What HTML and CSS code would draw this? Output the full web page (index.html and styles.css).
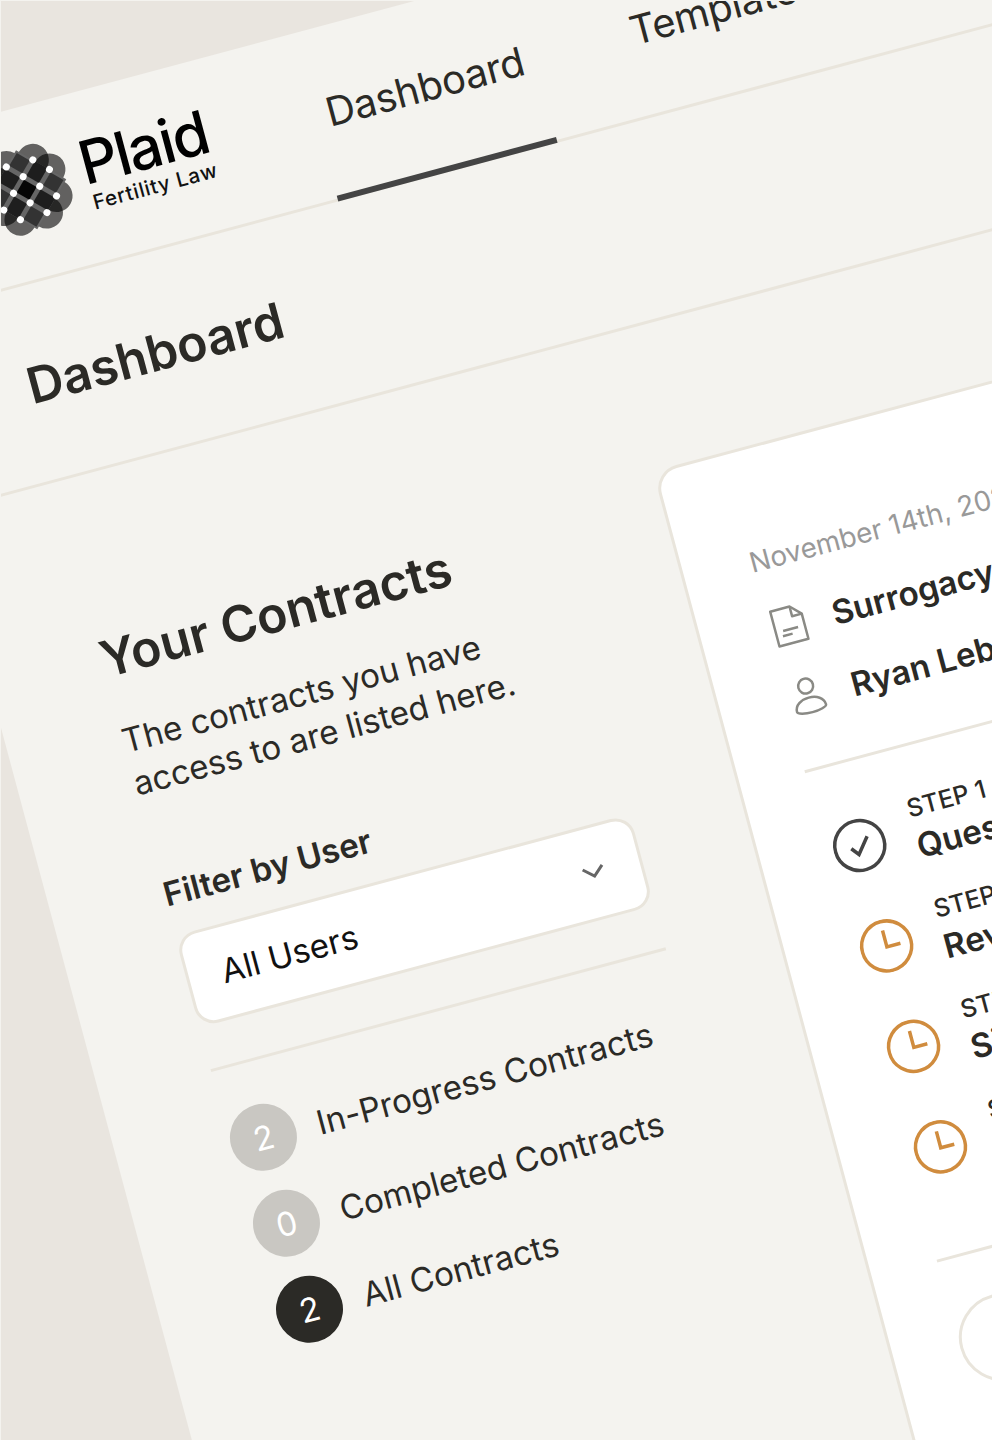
FILE: index.html
```html
<!DOCTYPE html>
<html lang="en">
<head>
    <meta charset="UTF-8">
    <meta name="viewport" content="width=device-width, initial-scale=1.0">
    <title>Plaid Fertility Law - Dashboard</title>
    <link rel="stylesheet" href="styles.css">
</head>
<body>
<div class="stage">
    <div class="frame">

        <header class="topbar">
            <div class="brand">
                <svg class="brand-mark" width="100" height="100" viewBox="-50 -50 100 100">
                    <g transform="rotate(45)">
                        <g fill="#000" fill-opacity="0.6">
                            <circle cx="-9.6" cy="-29" r="16"/>
                            <circle cx="9.6" cy="-29" r="16"/>
                            <circle cx="-9.6" cy="29" r="16"/>
                            <circle cx="9.6" cy="29" r="16"/>
                            <circle cx="-29" cy="-9.6" r="16"/>
                            <circle cx="-29" cy="9.6" r="16"/>
                            <circle cx="29" cy="-9.6" r="16"/>
                            <circle cx="29" cy="9.6" r="16"/>
                        </g>
                        <rect x="-29" y="-29" width="58" height="58" fill="#666"/>
                        <g fill="#333">
                            <rect x="-27" y="-27" width="15" height="15"/>
                            <rect x="12" y="-27" width="15" height="15"/>
                            <rect x="-27" y="12" width="15" height="15"/>
                            <rect x="12" y="12" width="15" height="15"/>
                        </g>
                        <g fill="#1e1e1e">
                            <rect x="-7.3" y="-29" width="14.6" height="17"/>
                            <rect x="-7.3" y="12" width="14.6" height="17"/>
                            <rect x="-29" y="-7.3" width="17" height="14.6"/>
                            <rect x="12" y="-7.3" width="17" height="14.6"/>
                        </g>
                        <rect x="-7.3" y="-7.3" width="14.6" height="14.6" fill="#060606"/>
                        <g fill="#fff">
                            <circle cx="-9.6" cy="-29" r="3.5"/>
                            <circle cx="9.6" cy="-29" r="3.5"/>
                            <circle cx="-29" cy="-9.6" r="3.5"/>
                            <circle cx="-9.6" cy="-9.6" r="3.5"/>
                            <circle cx="9.6" cy="-9.6" r="3.5"/>
                            <circle cx="29" cy="-9.6" r="3.5"/>
                            <circle cx="-29" cy="9.6" r="3.5"/>
                            <circle cx="-9.6" cy="9.6" r="3.5"/>
                            <circle cx="9.6" cy="9.6" r="3.5"/>
                            <circle cx="29" cy="9.6" r="3.5"/>
                            <circle cx="-9.6" cy="29" r="3.5"/>
                            <circle cx="9.6" cy="29" r="3.5"/>
                        </g>
                    </g>
                </svg>
                <div class="brand-text">
                    <div class="brand-name">Plaid</div>
                    <div class="brand-sub">Fertility Law</div>
                </div>
            </div>
            <nav class="nav">
                <a class="nav-link active" href="#">Dashboard</a>
                <a class="nav-link" href="#">Templates</a>
            </nav>
        </header>

        <section class="titlebar">
            <h1>Dashboard</h1>
        </section>

        <main class="content">
            <aside class="sidebar">
                <h2>Your Contracts</h2>
                <p class="intro">The contracts you have access to are listed here.</p>

                <label class="filter-label">Filter by User</label>
                <div class="select">
                    <span>All Users</span>
                    <svg width="24" height="14" viewBox="0 0 24 14"><path d="M2 2l10 9 10-9" fill="none" stroke="#666" stroke-width="3"/></svg>
                </div>

                <hr class="rule">

                <ul class="counts">
                    <li><span class="badge">2</span>In-Progress Contracts</li>
                    <li><span class="badge">0</span>Completed Contracts</li>
                    <li><span class="badge dark">2</span>All Contracts</li>
                </ul>
            </aside>

            <article class="card">
                <div class="card-date">November 14th, 2023</div>

                <div class="meta">
                    <svg width="40" height="40" viewBox="0 0 40 40" fill="none" stroke="#8a8a85" stroke-width="2.5" stroke-linejoin="round">
                        <path d="M5 2h20l10 10v26H5z"/>
                        <path d="M25 2v10h10M12.500 24H28M11 29h10"/>
                    </svg>
                    <span>Surrogacy Agreement</span>
                </div>
                <div class="meta">
                    <svg width="40" height="40" viewBox="0 0 40 40" fill="none" stroke="#8a8a85" stroke-width="2.5">
                        <circle cx="20" cy="9" r="7.5"/>
                        <path d="M5 32c0-7 7-11 15-11s15 4 15 11c0 2-7 4-15 4s-15-2-15-4z"/>
                    </svg>
                    <span>Ryan Lebowitz</span>
                </div>

                <hr class="card-rule">

                <ol class="steps">
                    <li>
                        <svg width="54" height="54" viewBox="0 0 54 54" fill="none" stroke="#444" stroke-width="3.5">
                            <circle cx="27" cy="27" r="25"/>
                            <path d="M18 28l6 7.5L36.500 20"/>
                        </svg>
                        <div class="step-text"><small>STEP 1</small><strong>Questionnaire</strong></div>
                    </li>
                    <li>
                        <svg width="54" height="54" viewBox="0 0 54 54" fill="none" stroke="#d08c3e" stroke-width="3.5">
                            <circle cx="27" cy="27" r="25"/>
                            <path d="M27 11v17h14"/>
                        </svg>
                        <div class="step-text"><small>STEP 2</small><strong>Review</strong></div>
                    </li>
                    <li>
                        <svg width="54" height="54" viewBox="0 0 54 54" fill="none" stroke="#d08c3e" stroke-width="3.5">
                            <circle cx="27" cy="27" r="25"/>
                            <path d="M27 11v17h14"/>
                        </svg>
                        <div class="step-text"><small>STEP 3</small><strong>Sign</strong></div>
                    </li>
                    <li>
                        <svg width="54" height="54" viewBox="0 0 54 54" fill="none" stroke="#d08c3e" stroke-width="3.5">
                            <circle cx="27" cy="27" r="25"/>
                            <path d="M27 11v17h14"/>
                        </svg>
                        <div class="step-text"><small>STEP 4</small><strong>Finish</strong></div>
                    </li>
                </ol>

                <hr class="card-rule lower">

                <div class="pill"></div>
            </article>
        </main>

    </div>
</div>
</body>
</html>
```

FILE: styles.css
```css
*{
    box-sizing: border-box;
}

body{
    margin: 0;
    font-family: Inter, "Liberation Sans", sans-serif;
    color: #2b2a26;
}

.stage{
    width: 992px;
    height: 1440px;
    overflow: hidden;
    background-color: #e9e5df;
    border-top: 1px solid #f4f3ef;
    border-left: 1px solid #f4f3ef;
}

/* the whole app is one tilted sheet */
.frame{
    width: 1300px;
    height: 1700px;
    margin: 152.2px 0 0 -153.6px;
    background-color: #f4f3ef;
    transform: rotate(-15deg);
    transform-origin: 0 0;
}

.topbar{
    display: flex;
    height: 174px;
    padding-left: 114px;
    border-bottom: 3px solid #e9e5dc;
}

.brand{
    display: flex;
    width: 348px;
    gap: 8px;
    padding-top: 31.5px;
}

.brand-mark{
    flex: none;
}

.brand-text{
    padding-top: 10px;
}

.brand-name{
    font-size: 60px;
    line-height: 58px;
    font-weight: 500;
    letter-spacing: -0.03em;
    color: #000;
}

.brand-sub{
    margin-top: 2px;
    padding-left: 3px;
    font-size: 20.5px;
    line-height: 20px;
    font-weight: 500;
    letter-spacing: 0.035em;
    color: #111;
}

.nav{
    display: flex;
    gap: 88px;
}

.nav-link{
    height: 174px;
    padding: 61.5px 11.5px 0;
    font-size: 40px;
    line-height: 48px;
    letter-spacing: -0.3px;
    color: #2b2a26;
    text-decoration: none;
}

.nav-link.active{
    border-bottom: 6px solid #444;
}

.titlebar{
    height: 198px;
    padding: 68px 0 0 114px;
    border-bottom: 3px solid #e9e5dc;
}

.titlebar h1{
    margin: 0;
    font-size: 50px;
    line-height: 62px;
    font-weight: 600;
}

.content{
    display: flex;
    padding: 144px 0 0 114px;
}

.sidebar{
    flex: none;
    width: 471px;
}

.sidebar h2{
    margin: 10.5px 0 0;
    font-size: 50px;
    line-height: 58px;
    font-weight: 600;
}

.intro{
    margin: 33px 0 0;
    font-size: 33.3px;
    line-height: 44px;
}

.filter-label{
    display: block;
    margin-top: 73px;
    font-size: 33.3px;
    line-height: 40px;
    font-weight: 600;
}

.select{
    display: flex;
    align-items: center;
    justify-content: space-between;
    height: 95px;
    margin-top: 22px;
    padding: 0 35px 0 33px;
    background-color: #fff;
    border: 3px solid #e9e5dc;
    border-radius: 20px;
    font-size: 33.3px;
    color: #111;
}

.rule{
    height: 3px;
    margin: 43px 0 0;
    border: none;
    background-color: #e9e5dc;
}

.counts{
    display: flex;
    flex-direction: column;
    gap: 22px;
    margin: 43.5px 0 0;
    padding: 0;
    list-style: none;
    font-size: 33.3px;
}

.counts li{
    display: flex;
    align-items: center;
    gap: 22px;
}

.badge{
    display: flex;
    align-items: center;
    justify-content: center;
    width: 67px;
    height: 67px;
    border-radius: 50%;
    background-color: #c9c7c2;
    color: #fff;
    font-size: 33px;
}

.badge.dark{
    background-color: #2b2a26;
}

.card{
    flex: none;
    width: 640px;
    height: 1300px;
    margin-left: 111px;
    padding: 94px 0 0 67px;
    background-color: #fff;
    border: 3px solid #e9e5dc;
    border-radius: 24px;
}

.card-date{
    font-size: 27.8px;
    line-height: 34px;
    color: #999;
}

.meta{
    display: flex;
    align-items: center;
    gap: 25px;
    margin-top: 32px;
    padding-left: 1.5px;
    font-size: 33.3px;
    line-height: 42px;
    font-weight: 600;
    white-space: nowrap;
}

.meta + .meta{
    margin-top: 32px;
}

.meta svg{
    flex: none;
}

.card-rule{
    height: 3px;
    margin: 49px 0 0 -1.5px;
    border: none;
    background-color: #e9e5dc;
}

.card-rule.lower{
    margin-top: 74.5px;
    margin-left: 0;
}

.steps{
    display: flex;
    flex-direction: column;
    gap: 32px;
    margin: 45px 0 0;
    padding: 0 0 0 6.3px;
    list-style: none;
}

.steps li{
    display: flex;
    align-items: center;
    gap: 28px;
    height: 72px;
}

.steps svg{
    flex: none;
    margin-top: 6px;
}

.step-text{
    margin-top: 5px;
}

.steps small{
    display: block;
    font-size: 25px;
    line-height: 30px;
    font-weight: 500;
}

.steps strong{
    display: block;
    margin-top: 3.5px;
    font-size: 33.3px;
    line-height: 42px;
    font-weight: 600;
}

.pill{
    width: 400px;
    height: 88px;
    margin: 45px 0 0;
    border: 3px solid #e9e5dc;
    border-radius: 44px;
}
```
